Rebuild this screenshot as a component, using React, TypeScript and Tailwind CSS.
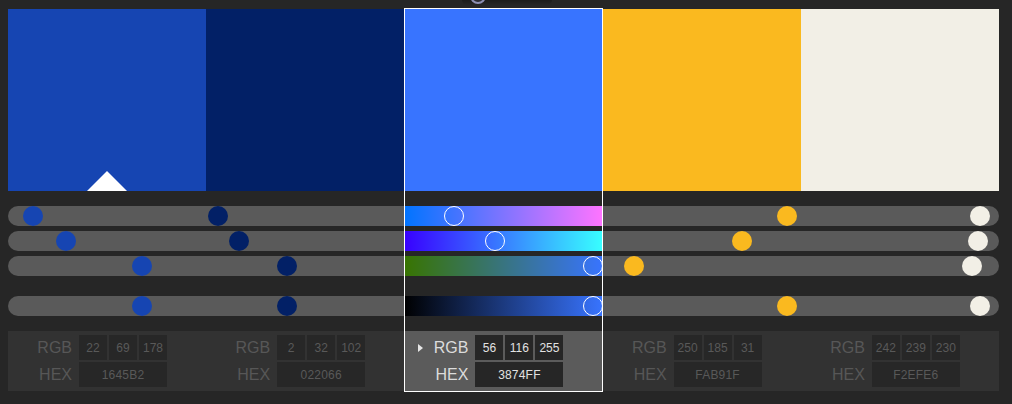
import React from "react";

type Sw = { hex: string; rgb: [number, number, number] };

const swatches: Sw[] = [
  { hex: "1645B2", rgb: [22, 69, 178] },
  { hex: "022066", rgb: [2, 32, 102] },
  { hex: "3874FF", rgb: [56, 116, 255] },
  { hex: "FAB91F", rgb: [250, 185, 31] },
  { hex: "F2EFE6", rgb: [242, 239, 230] },
];

const SELECTED = 2;

function gradientFor(rgb: [number, number, number], row: number): string {
  const [r, g, b] = rgb;
  if (row === 0) return `linear-gradient(to right, rgb(0,${g},${b}), rgb(255,${g},${b}))`;
  if (row === 1) return `linear-gradient(to right, rgb(${r},0,${b}), rgb(${r},255,${b}))`;
  if (row === 2) return `linear-gradient(to right, rgb(${r},${g},0), rgb(${r},${g},255))`;
  return `linear-gradient(to right, #000, rgb(${r},${g},${b}))`;
}

function Knob({ value, color, selected }: { value: number; color: string; selected: boolean }) {
  return (
    <div
      className={
        selected
          ? "absolute top-0 h-5 w-5 rounded-full border-[1.5px] border-white"
          : "absolute top-0 h-5 w-5 rounded-full"
      }
      style={{
        left: `calc(${value / 255} * (100% - 20px))`,
        backgroundColor: selected ? "transparent" : color,
      }}
    />
  );
}

function Track({ sw, idx, row, value }: { sw: Sw; idx: number; row: number; value: number }) {
  const selected = idx === SELECTED;
  const rounding = idx === 0 ? "rounded-l-full" : idx === swatches.length - 1 ? "rounded-r-full" : "";
  return (
    <div
      className={`relative h-5 ${rounding} ${selected ? "" : "bg-[#5a5a5a]"}`}
      style={selected ? { backgroundImage: gradientFor(sw.rgb, row) } : undefined}
    >
      <Knob value={value} color={`#${sw.hex}`} selected={selected} />
    </div>
  );
}

function Column({ sw, idx }: { sw: Sw; idx: number }) {
  const selected = idx === SELECTED;
  const [r, g, b] = sw.rgb;
  const bright = Math.max(r, g, b);
  const labelCls = selected ? "text-[#dcdcdc]" : "text-[#575757]";
  const boxCls = selected
    ? "bg-[#262626] text-[#e2e2e2]"
    : "bg-[#272727] text-[#595959]";
  return (
    <div className="relative flex min-w-0 flex-1 flex-col">
      <div className="relative h-[182px]" style={{ backgroundColor: `#${sw.hex}` }}>
        {idx === 0 && (
          <div className="absolute bottom-0 left-1/2 h-0 w-0 -translate-x-1/2 border-x-[20px] border-b-[20px] border-x-transparent border-b-white" />
        )}
      </div>
      <div className="mt-[15px] flex flex-col gap-[5px]">
        <Track sw={sw} idx={idx} row={0} value={r} />
        <Track sw={sw} idx={idx} row={1} value={g} />
        <Track sw={sw} idx={idx} row={2} value={b} />
      </div>
      <div className="mt-5">
        <Track sw={sw} idx={idx} row={3} value={bright} />
      </div>
      <div
        className={`mt-[15px] flex h-[60px] flex-col gap-[2px] py-1 ${selected ? "bg-[#5b5b5b]" : "bg-[#323232]"}`}
      >
        <div className="relative flex h-[25px] items-center">
          {selected && (
            <div className="absolute left-[14px] top-[9px] h-0 w-0 border-y-[4px] border-l-[5px] border-y-transparent border-l-[#e6e6e6]" />
          )}
          <div className={`w-[64px] text-right text-[16px] leading-none ${labelCls}`}>RGB</div>
          <div className="ml-[7px] flex gap-[2px]">
            {sw.rgb.map((v, i) => (
              <div
                key={i}
                className={`flex h-[25px] w-[28px] items-center justify-center text-[12px] ${boxCls}`}
              >
                {v}
              </div>
            ))}
          </div>
        </div>
        <div className="flex h-[25px] items-center">
          <div className={`w-[64px] text-right text-[16px] leading-none ${labelCls}`}>HEX</div>
          <div
            className={`ml-[7px] flex h-[25px] w-[88px] items-center justify-center text-[12px] tracking-[0.2px] ${boxCls}`}
          >
            {sw.hex}
          </div>
        </div>
      </div>
      {selected && (
        <div className="pointer-events-none absolute -top-px bottom-[-1px] left-0 right-0 border border-white" />
      )}
    </div>
  );
}

export default function App() {
  return (
    <div
      className="relative h-[404px] w-[1012px] overflow-hidden bg-[#262626]"
      style={{ fontFamily: '"Liberation Sans", Arial, sans-serif' }}
    >
      <div className="flex pl-2 pr-[13px] pt-[9px]">
        {swatches.map((sw, i) => (
          <Column key={sw.hex} sw={sw} idx={i} />
        ))}
      </div>
      <div className="absolute left-[462px] top-0 h-[5px] w-[90px] rounded-b-full bg-gradient-to-b from-[#1c1c1c] to-[#262626]" />
      <div className="absolute left-[470px] top-[-12px] h-[16px] w-[16px] rounded-full border-2 border-[#8d8fb4] bg-[#2c2c34]" />
    </div>
  );
}
